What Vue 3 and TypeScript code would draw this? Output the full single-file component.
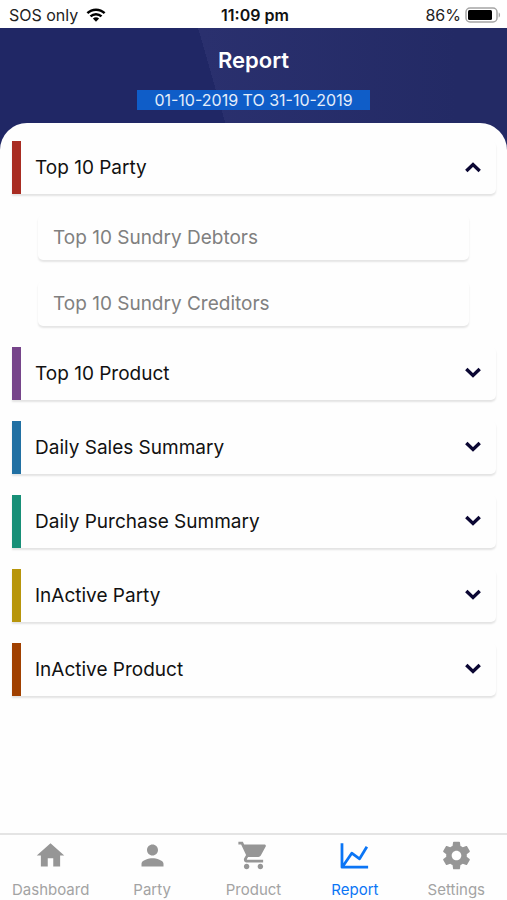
<script setup lang="ts">
import { ref } from 'vue'

interface Section {
  title: string
  color: string
  items: string[]
}

interface Tab {
  label: string
  icon: string
}

const sections: Section[] = [
  { title: 'Top 10 Party', color: '#a82c22', items: ['Top 10 Sundry Debtors', 'Top 10 Sundry Creditors'] },
  { title: 'Top 10 Product', color: '#76448a', items: [] },
  { title: 'Daily Sales Summary', color: '#2170a3', items: [] },
  { title: 'Daily Purchase Summary', color: '#178f77', items: [] },
  { title: 'InActive Party', color: '#b7950b', items: [] },
  { title: 'InActive Product', color: '#a04000', items: [] },
]

const tabs: Tab[] = [
  { label: 'Dashboard', icon: 'M10 20v-6h4v6h5v-8h3L12 3 2 12h3v8z' },
  {
    label: 'Party',
    icon: 'M12 12c2.21 0 4-1.79 4-4s-1.79-4-4-4-4 1.79-4 4 1.79 4 4 4zm0 2c-2.67 0-8 1.34-8 4v2h16v-2c0-2.66-5.33-4-8-4z',
  },
  {
    label: 'Product',
    icon: 'M7 18c-1.1 0-1.99.9-1.99 2S5.9 22 7 22s2-.9 2-2-.9-2-2-2zM1 2v2h2l3.6 7.59-1.35 2.45c-.16.28-.25.61-.25.96 0 1.1.9 2 2 2h12v-2H7.42c-.14 0-.25-.11-.25-.25l.03-.12.9-1.63h7.45c.75 0 1.41-.41 1.75-1.03l3.58-6.49c.08-.14.12-.31.12-.48 0-.55-.45-1-1-1H5.21l-.94-2H1zm16 16c-1.1 0-1.99.9-1.99 2s.89 2 1.99 2 2-.9 2-2-.9-2-2-2z',
  },
  { label: 'Report', icon: '' },
  {
    label: 'Settings',
    icon: 'M19.43 12.98c.04-.32.07-.64.07-.98s-.03-.66-.07-.98l2.11-1.65c.19-.15.24-.42.12-.64l-2-3.46c-.12-.22-.39-.3-.61-.22l-2.49 1c-.52-.4-1.08-.73-1.69-.98l-.38-2.65C14.46 2.18 14.25 2 14 2h-4c-.25 0-.46.18-.49.42l-.38 2.65c-.61.25-1.17.59-1.69.98l-2.49-1c-.23-.09-.49 0-.61.22l-2 3.46c-.13.22-.07.49.12.64l2.11 1.65c-.04.32-.07.65-.07.98s.03.66.07.98l-2.11 1.65c-.19.15-.24.42-.12.64l2 3.46c.12.22.39.3.61.22l2.49-1c.52.4 1.08.73 1.69.98l.38 2.65c.03.24.24.42.49.42h4c.25 0 .46-.18.49-.42l.38-2.65c.61-.25 1.17-.59 1.69-.98l2.49 1c.23.09.49 0 .61-.22l2-3.46c.12-.22.07-.49-.12-.64l-2.11-1.65zM12 15.5c-1.93 0-3.5-1.57-3.5-3.5s1.57-3.5 3.5-3.5 3.5 1.57 3.5 3.5-1.57 3.5-3.5 3.5z',
  },
]

const openIndex = ref<number>(0)
const activeTab = ref<string>('Report')

function toggle(index: number): void {
  openIndex.value = openIndex.value === index ? -1 : index
}
</script>

<template>
  <div class="screen">
    <div class="status">
      <div class="status-side">
        <span>SOS only</span>
        <svg class="wifi" viewBox="0 0 20 14" aria-hidden="true">
          <path d="M1.4 5.2a12.4 12.4 0 0 1 17.2 0M4.5 8.4a8 8 0 0 1 11 0" fill="none" stroke="currentColor" stroke-width="2.5" />
          <path d="M6.9 10.6a4.5 4.5 0 0 1 6.2 0L10 13.8z" fill="currentColor" />
        </svg>
      </div>
      <span class="clock">11:09 pm</span>
      <div class="status-side status-right">
        <span>86%</span>
        <svg class="battery" viewBox="0 0 36 16" aria-hidden="true">
          <rect x="1" y="1" width="31" height="14" rx="4" fill="none" stroke="#a5a5a5" stroke-width="1.5" />
          <rect x="3" y="3" width="24" height="10" rx="1.5" fill="#000" />
          <path d="M33.7 5.5v5c1.8-.6 1.8-4.4 0-5z" fill="#a5a5a5" />
        </svg>
      </div>
    </div>

    <header class="header">
      <h1>Report</h1>
      <button type="button" class="range">01-10-2019 TO 31-10-2019</button>
    </header>

    <main class="sheet">
      <section v-for="(section, i) in sections" :key="section.title" class="section">
        <button
          type="button"
          class="card"
          :style="{ borderLeftColor: section.color }"
          :aria-expanded="openIndex === i"
          @click="toggle(i)"
        >
          <span>{{ section.title }}</span>
          <svg class="chevron" viewBox="0 0 18 16" aria-hidden="true">
            <path
              :d="openIndex === i ? 'M2.3 11 9 4.6l6.700 6.400' : 'M2.3 3 9 9.400 15.700 3'"
              fill="none"
              stroke="#0b0733"
              stroke-width="3.4"
            />
          </svg>
        </button>
        <template v-if="openIndex === i">
          <a v-for="item in section.items" :key="item" href="#" class="sub">{{ item }}</a>
        </template>
      </section>
    </main>

    <nav class="tabs">
      <a
        v-for="tab in tabs"
        :key="tab.label"
        href="#"
        class="tab"
        :class="{ active: activeTab === tab.label }"
        @click.prevent="activeTab = tab.label"
      >
        <svg class="tab-icon" viewBox="0 0 24 24" aria-hidden="true">
          <path v-if="tab.icon" :d="tab.icon" fill="currentColor" />
          <path
            v-else
            d="M2.9 3v17.500h19M3.400 20l6.600-9.700 5.700 4.100 5.300-8.700"
            fill="none"
            stroke="currentColor"
            stroke-width="2"
            stroke-linejoin="round"
          />
        </svg>
        <span>{{ tab.label }}</span>
      </a>
    </nav>
  </div>
</template>

<style>
body {
  margin: 0;
  background: #fefefe;
}
</style>

<style scoped>
.screen {
  display: flex;
  flex-direction: column;
  min-height: 100vh;
  font-family: Inter, 'Liberation Sans', sans-serif;
  color: #111;
}

.status {
  display: grid;
  grid-template-columns: 1fr auto 1fr;
  align-items: center;
  height: 28px;
  padding: 2px 6px 0 9px;
  box-sizing: border-box;
  font-size: 16px;
  line-height: 26px;
  color: #222;
  background: #fff;
}

.status-side {
  display: flex;
  align-items: center;
  gap: 8px;
}

.status-right {
  justify-content: flex-end;
  gap: 4px;
}

.clock {
  font-weight: 600;
  color: #111;
}

.wifi {
  width: 20px;
  height: 14px;
  color: #000;
}

.battery {
  width: 36px;
  height: 16px;
}

.header {
  display: flex;
  flex-direction: column;
  align-items: center;
  gap: 16px;
  padding: 18px 0 40px;
  background:
    linear-gradient(74deg, #202765 0, #202765 43%, transparent 43%),
    linear-gradient(90deg, #2a306e 40%, #232a65 90%);
}

h1 {
  margin: 0;
  font-size: 22px;
  line-height: 28px;
  font-weight: 600;
  color: #fff;
}

.range {
  border: 0;
  padding: 0 17px;
  font-family: inherit;
  font-size: 16px;
  line-height: 20px;
  color: #e4edfa;
  background: #0f5dc8;
}

.sheet {
  display: flex;
  flex-direction: column;
  flex: 1;
  gap: 21px;
  margin-top: -27px;
  padding: 18px 11px 21px 12px;
  border-radius: 27px 27px 0 0;
  background: #fefefe;
}

.section {
  display: flex;
  flex-direction: column;
  gap: 21px;
}

.card {
  display: flex;
  align-items: center;
  justify-content: space-between;
  height: 53px;
  padding: 0 14px;
  border: 0;
  border-left: 9px solid;
  border-radius: 0 5px 5px 0;
  font-family: inherit;
  font-size: 19px;
  line-height: 24px;
  text-align: left;
  color: #111;
  background: #fefefe;
  box-shadow: 0 2px 2px rgba(0, 0, 0, 0.11);
}

.chevron {
  width: 18px;
  height: 16px;
}

.sub {
  margin: 0 27px 0 26px;
  padding: 11px 15px 10px;
  border-radius: 5px;
  font-size: 19px;
  line-height: 24px;
  color: #808080;
  text-decoration: none;
  background: #fefefe;
  box-shadow: 0 2px 2px rgba(0, 0, 0, 0.1);
}

.tabs {
  display: grid;
  grid-template-columns: repeat(5, 1fr);
  border-top: 2px solid #e4e4e4;
  background: #fefefe;
}

.tab {
  display: flex;
  flex-direction: column;
  align-items: center;
  gap: 7px;
  padding: 4px 0 0;
  font-size: 15px;
  line-height: 21px;
  color: #a3a3a3;
  text-decoration: none;
}

.tab-icon {
  width: 33px;
  height: 33px;
  color: #969696;
}

.active,
.active .tab-icon {
  color: #0b75f5;
}
</style>
